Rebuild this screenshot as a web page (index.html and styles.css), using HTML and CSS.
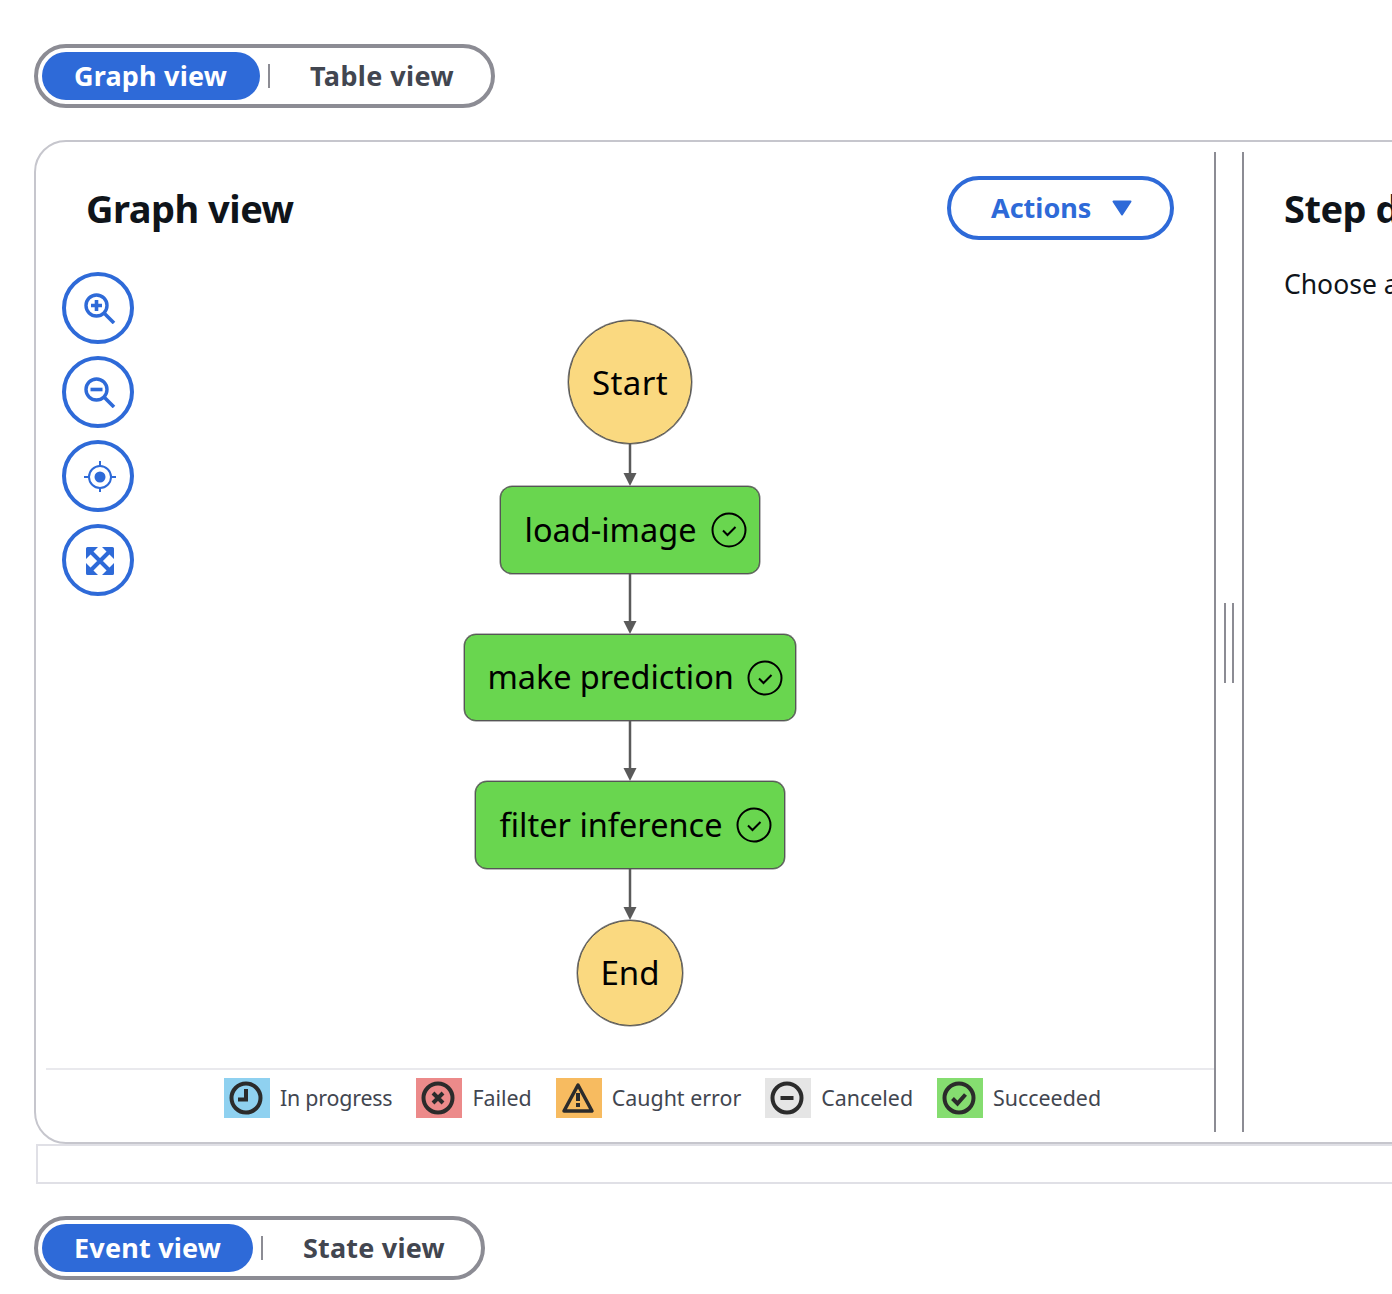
FILE: index.html
```html
<!DOCTYPE html>
<html lang="en">
<head>
<meta charset="utf-8">
<title>Execution graph</title>
<link rel="stylesheet" href="styles.css">
</head>
<body>
<div class="page">
  <div class="segmented seg-top">
    <span class="seg-btn active btn-graph">Graph view</span>
    <span class="seg-div"></span>
    <span class="seg-btn btn-table">Table view</span>
  </div>

  <section class="card">
    <div class="graph-pane">
      <header class="pane-head">
        <h2 class="title">Graph view</h2>
        <button class="actions"><span>Actions</span>
          <svg class="caret" width="20" height="16" viewBox="0 0 20 16"><path d="M1.500 1.500h17L10 14.500z" fill="#2e6ad8" stroke="#2e6ad8" stroke-width="2" stroke-linejoin="round"/></svg>
        </button>
      </header>
      <div class="canvas">
        <div class="zoom-tools">
          <button class="tool"><svg width="32" height="32" viewBox="0 0 32 32" fill="none" stroke="#2e6ad8"><circle cx="12.500" cy="13.500" r="10.500" stroke-width="3.400"/><path d="M20 21l10 10" stroke-width="3.600"/><path d="M12.500 8v11M7 13.500h11" stroke-width="3.600"/></svg></button>
          <button class="tool"><svg width="32" height="32" viewBox="0 0 32 32" fill="none" stroke="#2e6ad8"><circle cx="12.500" cy="13.500" r="10.500" stroke-width="3.400"/><path d="M20 21l10 10" stroke-width="3.600"/><path d="M6.500 13.500h12" stroke-width="3.600"/></svg></button>
          <button class="tool"><svg width="32" height="32" viewBox="0 -1 32 32" fill="none" stroke="#2e6ad8" stroke-width="2"><circle cx="16" cy="16" r="11"/><circle cx="16" cy="16" r="5.500" fill="#2e6ad8" stroke="none"/><path d="M16 0v6M16 26v6M0 16h6M26 16h6"/></svg></button>
          <button class="tool"><svg width="32" height="32" viewBox="0 -1 32 32"><path d="M2 3.500A1.500 1.500 0 0 1 3.500 2H14L2 14zM30 3.500A1.500 1.500 0 0 0 28.500 2H18l12 12zM2 28.500A1.500 1.500 0 0 0 3.500 30H14L2 18zM30 28.500A1.500 1.500 0 0 1 28.500 30H18l12-12z" fill="#2e6ad8"/><path d="M4 4l24 24M28 4L4 28" stroke="#2e6ad8" stroke-width="4"/></svg></button>
        </div>

        <div class="flow">
          <div class="terminal start">Start</div>
          <svg class="edge" width="16" height="42" viewBox="0 0 16 42"><path d="M8 0v30" stroke="#5a5a5a" stroke-width="2.500"/><path d="M1.500 29h13L8 42z" fill="#5a5a5a"/></svg>
          <div class="state state-load"><span>load-image</span>
            <svg class="tick" width="36" height="36" viewBox="0 0 36 36" fill="none" stroke="#000" stroke-width="2"><circle cx="18" cy="18" r="16.500"/><path d="M12 18.500l4.500 4.500 8-8"/></svg>
          </div>
          <svg class="edge" width="16" height="60" viewBox="0 0 16 60"><path d="M8 0v48" stroke="#5a5a5a" stroke-width="2.500"/><path d="M1.500 47h13L8 60z" fill="#5a5a5a"/></svg>
          <div class="state state-make"><span>make prediction</span>
            <svg class="tick" width="36" height="36" viewBox="0 0 36 36" fill="none" stroke="#000" stroke-width="2"><circle cx="18" cy="18" r="16.500"/><path d="M12 18.500l4.500 4.500 8-8"/></svg>
          </div>
          <svg class="edge" width="16" height="60" viewBox="0 0 16 60"><path d="M8 0v48" stroke="#5a5a5a" stroke-width="2.500"/><path d="M1.500 47h13L8 60z" fill="#5a5a5a"/></svg>
          <div class="state state-filter"><span>filter inference</span>
            <svg class="tick" width="36" height="36" viewBox="0 0 36 36" fill="none" stroke="#000" stroke-width="2"><circle cx="18" cy="18" r="16.500"/><path d="M12 18.500l4.500 4.500 8-8"/></svg>
          </div>
          <svg class="edge" width="16" height="51" viewBox="0 0 16 51"><path d="M8 0v39" stroke="#5a5a5a" stroke-width="2.500"/><path d="M1.500 38h13L8 51z" fill="#5a5a5a"/></svg>
          <div class="terminal end"><span>End</span></div>
        </div>
      </div>

      <footer class="legend">
        <div class="legend-item item-progress">
          <span class="swatch sw-progress"><svg width="34" height="34" viewBox="0 0 34 34" fill="none" stroke="#2b2b2b" stroke-width="4"><circle cx="17" cy="17" r="14.500"/><path d="M17 8v10.500H9"/></svg></span>
          <span>In progress</span>
        </div>
        <div class="legend-item">
          <span class="swatch sw-failed"><svg width="34" height="34" viewBox="0 0 34 34" fill="none" stroke="#2b2b2b" stroke-width="4"><circle cx="17" cy="17" r="14.500"/><path d="M12 12l10 10M22 12L12 22"/></svg></span>
          <span>Failed</span>
        </div>
        <div class="legend-item">
          <span class="swatch sw-caught"><svg width="34" height="34" viewBox="0 0 34 34" fill="none" stroke="#2b2b2b" stroke-width="3.500" stroke-linejoin="round"><path d="M17 4L31 30H3z"/><path d="M17 12v8M17 22v4" stroke-width="4"/></svg></span>
          <span>Caught error</span>
        </div>
        <div class="legend-item">
          <span class="swatch sw-canceled"><svg width="34" height="34" viewBox="0 0 34 34" fill="none" stroke="#2b2b2b" stroke-width="4"><circle cx="17" cy="17" r="14.500"/><path d="M10.500 17h13"/></svg></span>
          <span>Canceled</span>
        </div>
        <div class="legend-item">
          <span class="swatch sw-succeeded"><svg width="34" height="34" viewBox="0 0 34 34" fill="none" stroke="#2b2b2b" stroke-width="4"><circle cx="17" cy="17" r="14.500"/><path d="M10.500 17.500l5 5 8-9"/></svg></span>
          <span>Succeeded</span>
        </div>
      </footer>
    </div>

    <div class="splitter"><span class="grip"></span></div>

    <aside class="details-pane">
      <h2 class="title">Step details</h2>
      <p class="hint">Choose a state in the graph to view its details.</p>
    </aside>
  </section>

  <div class="strip"></div>

  <div class="segmented seg-bottom">
    <span class="seg-btn active btn-event">Event view</span>
    <span class="seg-div"></span>
    <span class="seg-btn btn-state">State view</span>
  </div>
</div>
</body>
</html>
```
FILE: styles.css
```css
* { box-sizing: border-box; }
html, body { margin: 0; padding: 0; background: #fff; }
body { font-family: "Noto Sans", "Open Sans", sans-serif; color: #0f141a; }
.page { width: 1392px; height: 1294px; overflow: hidden; padding: 44px 0 0 34px; }

.segmented { display: flex; align-items: center; height: 64px; border: 4px solid #8c8c94; border-radius: 32px; padding: 0 4px; }
.seg-top { width: 461px; }
.seg-bottom { width: 451px; margin-top: 32px; }
.seg-btn { font-size: 27px; font-weight: 700; letter-spacing: 0.2px; color: #424650; height: 48px; line-height: 48px; white-space: nowrap; }
.seg-btn.active { background: #2e6ad8; color: #fff; border-radius: 24px; padding: 0 32px; }
.btn-graph { width: 218px; }
.btn-event { width: 211px; }
.seg-div { width: 2px; height: 24px; background: #8c8c94; margin: 0 8px; }
.btn-table, .btn-state { padding-left: 32px; }
.btn-table { letter-spacing: 0.4px; }

.card { display: flex; width: 1500px; height: 1004px; margin-top: 32px; padding: 10px; border: 2px solid #c6c6cd; border-radius: 32px 0 0 32px; }
.graph-pane { width: 1168px; display: flex; flex-direction: column; flex: none; }
.pane-head { display: flex; justify-content: space-between; align-items: flex-start; padding: 24px 40px 0 40px; height: 88px; }
.title { margin: 0; font-size: 38px; letter-spacing: -0.5px; line-height: 64px; font-weight: 700; color: #0f141a; white-space: nowrap; }
.actions { display: flex; align-items: center; justify-content: space-between; width: 227px; height: 64px; padding: 0 38px 0 40px; border: 4px solid #2e6ad8; border-radius: 32px; background: #fff; color: #2e6ad8; font: 700 27px "Noto Sans", sans-serif; }
.actions span { margin-bottom: 2px; }

.canvas { position: relative; height: 828px; padding-top: 80px; }
.zoom-tools { position: absolute; left: 16px; top: 32px; display: flex; flex-direction: column; gap: 12px; }
.tool { display: flex; align-items: center; justify-content: center; width: 72px; height: 72px; padding: 0 0 0 4px; border: 4px solid #2e6ad8; border-radius: 50%; background: #fff; }
.flow { display: flex; flex-direction: column; align-items: center; }
.edge { display: block; flex: none; }
.terminal { display: flex; align-items: center; justify-content: center; background: #fad980; border: 1px solid #555; box-shadow: 0 0 0 0.5px #777; border-radius: 50%; color: #000; font-size: 33px; }
.start { width: 124px; height: 124px; letter-spacing: 0.4px; }
.end { width: 106px; height: 106px; }
.end span { margin-bottom: 2px; }
.state { display: flex; align-items: center; gap: 14px; height: 88px; padding-left: 23.5px; background: #69d64f; border: 1px solid #555; box-shadow: 0 0 0 0.5px #777; border-radius: 12px; color: #000; font-size: 32.5px; white-space: nowrap; }
.state span { margin-bottom: 2px; }
.state-load { width: 260px; }
.state-make { width: 332px; height: 87px; gap: 13px; padding-left: 22.5px; }
.state-make span { letter-spacing: -0.1px; }
.state-filter { width: 310px; }
.tick { flex: none; }

.legend { display: flex; justify-content: center; gap: 24px; height: 64px; padding: 8px 0 0 65px; border-top: 2px solid #e9e9ed; font-size: 21.4px; color: #424650; }
.legend-item { display: flex; align-items: center; gap: 10px; height: 40px; white-space: nowrap; }
.legend-item > span:last-child { margin-bottom: 2px; }
.item-progress > span:last-child { letter-spacing: -0.2px; }
.swatch { display: flex; align-items: center; justify-content: center; width: 46px; height: 40px; padding-right: 2px; }
.sw-progress { background: #8fd1f0; }
.sw-failed { background: #ec8a8a; }
.sw-caught { background: #f7bb60; }
.sw-canceled { background: #e5e5e5; }
.sw-succeeded { background: #85dd70; }

.splitter { display: flex; align-items: center; justify-content: center; flex: none; width: 30px; border-left: 2px solid #8c8c94; border-right: 2px solid #8c8c94; }
.grip { width: 10px; height: 80px; margin-top: 2px; border-left: 2px solid #8c8c94; border-right: 2px solid #8c8c94; }
.details-pane { padding: 24px 0 0 40px; white-space: nowrap; }
.hint { margin: 26px 0 0; font-size: 26.5px; line-height: 36px; color: #0f141a; }

.strip { width: 1500px; height: 40px; margin-left: 2px; border: 2px solid #e0e0e6; border-right: none; }
```
